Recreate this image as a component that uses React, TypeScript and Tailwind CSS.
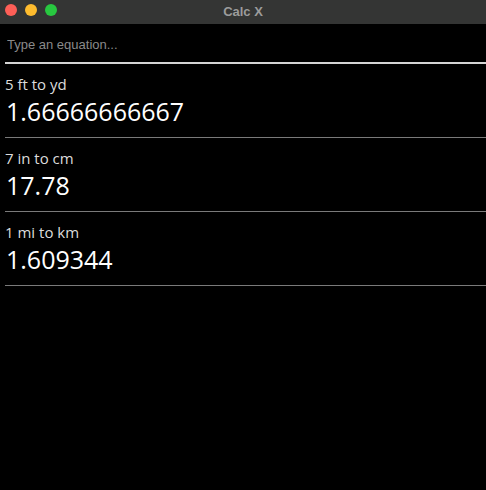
import React from 'react';

const results = [
  { expr: '5 ft to yd', value: '1.66666666667' },
  { expr: '7 in to cm', value: '17.78' },
  { expr: '1 mi to km', value: '1.609344' },
];

const App: React.FC = () => {
  return (
    <div className="w-[486px] h-[490px] bg-black flex flex-col overflow-hidden">
      <div className="relative h-[24px] bg-[#343534] flex items-center justify-center shrink-0">
        <div className="absolute left-[5px] top-[4px] flex gap-[8px]">
          <span className="w-[12px] h-[12px] rounded-full bg-[#fe5f57]" />
          <span className="w-[12px] h-[12px] rounded-full bg-[#febc2e]" />
          <span className="w-[12px] h-[12px] rounded-full bg-[#28c840]" />
        </div>
        <span className="text-[13px] font-bold text-[#9c9c9c] font-['Liberation_Sans',Arial,sans-serif]">
          Calc X
        </span>
      </div>

      <div className="pl-[5px]">
        <input
          type="text"
          placeholder="Type an equation..."
          className="w-full h-[40px] bg-transparent border-b-2 border-[#d4d4d4] px-[2px] pt-[2px] text-[13px] text-white placeholder:text-[#8a8a8a] outline-none font-['Liberation_Sans',Arial,sans-serif]"
        />
        {results.map((r) => (
          <div
            key={r.expr}
            className="h-[74px] border-b border-[#7a7a7a] pt-[10px] font-['Open_Sans',sans-serif]"
          >
            <div className="text-[15px] leading-[20px] text-[#dcdcdc]">{r.expr}</div>
            <div className="text-[25px] leading-[34px] text-white pl-[1px]">{r.value}</div>
          </div>
        ))}
      </div>
    </div>
  );
};

export default App;
